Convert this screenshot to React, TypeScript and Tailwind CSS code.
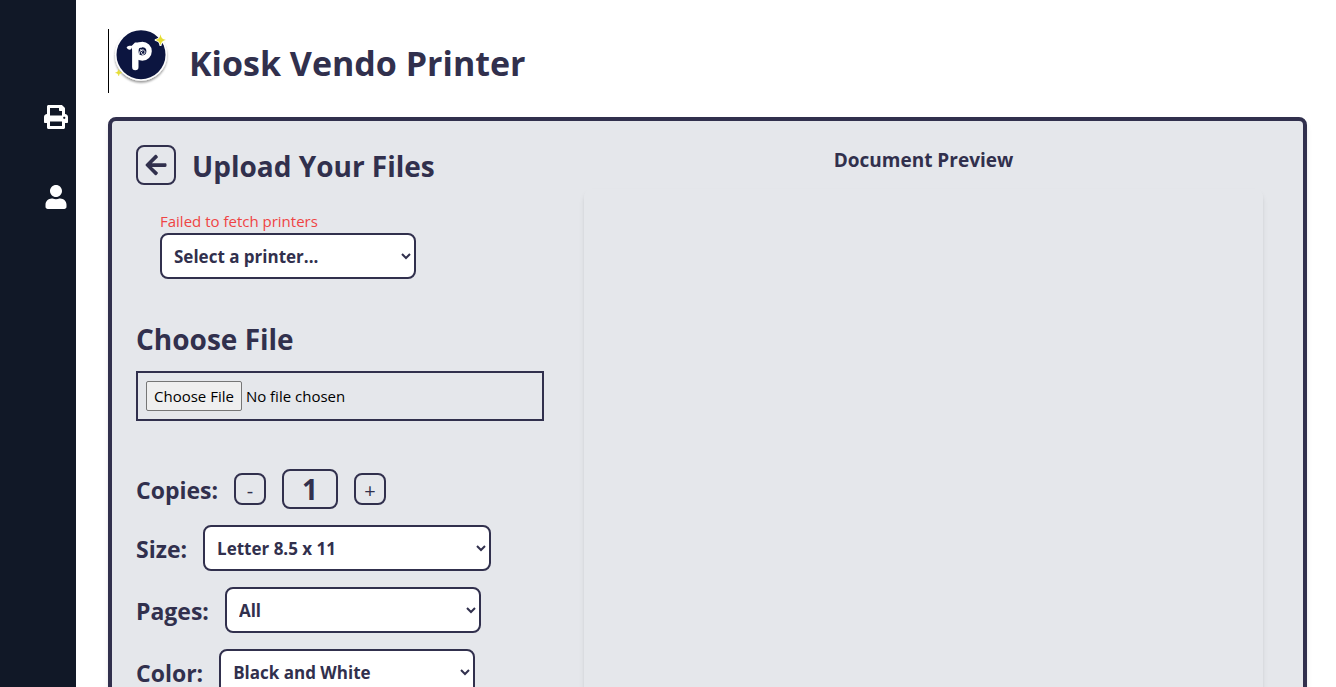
import { useState, type ReactNode } from "react";
import { FaArrowLeft, FaPrint, FaUser } from "react-icons/fa";

const selectClass =
  "h-[46px] rounded-lg border-2 border-[#31304d] bg-white px-2 text-[17px] font-bold text-[#31304d]";

const stepClass =
  "flex size-8 items-center justify-center rounded-lg border-2 border-[#31304d] pt-1 text-xl leading-6";

function Logo() {
  return (
    <svg viewBox="0 0 56 60" className="h-[60px] w-14 shrink-0" aria-label="Kiosk Vendo Printer logo" role="img">
      <defs>
        <filter id="logo-shadow" x="-20%" y="-20%" width="140%" height="150%">
          <feDropShadow dx="0" dy="2" stdDeviation="1.2" floodColor="#000" floodOpacity="0.4" />
        </filter>
      </defs>
      <circle cx="28" cy="25.700" r="26" fill="#fff" filter="url(#logo-shadow)" />
      <circle cx="28" cy="25.700" r="24.500" fill="#0c1540" />
      <path d="M22.300 38V20" fill="none" stroke="#fff" strokeWidth="6.400" strokeLinecap="round" />
      <circle cx="29.300" cy="22.300" r="6.800" fill="none" stroke="#fff" strokeWidth="5.400" />
      <path d="M22 13.500h7v5h-7l-3 3v-5z" fill="#fff" />
      <path d="M13.600 18.200c1.600-1.500 4-1.800 6-1.200l-1.200 2.800c-1 1.500-4.200 1-4.800-1.600z" fill="#fff" />
      <path
        d="M26.400 24.400c0-3 2.600-4.200 4.400-3.200s1.400 3.700-.6 4.200M27.300 20.700l2 1.300M28.300 23.200l1.300 2.800"
        fill="none"
        stroke="#fff"
        strokeWidth="0.900"
        strokeLinecap="round"
      />
      <path
        d="M47.500 5.300c.9 4 1.600 4.700 5.500 5.700-3.900 1-4.600 1.700-5.500 5.700-.9-4-1.600-4.700-5.500-5.700 3.900-1 4.600-1.700 5.500-5.700z"
        fill="#e6de35"
        stroke="#fff"
        strokeWidth="1.800"
        paintOrder="stroke"
      />
      <path
        d="M5.700 40.500c.6 2.200 1.100 2.700 3.200 3.200-2.100.5-2.600 1-3.200 3.200-.6-2.200-1.100-2.700-3.200-3.200 2.100-.5 2.600-1 3.200-3.200z"
        fill="#e6de35"
        stroke="#e6de35"
        strokeWidth="0.400"
      />
    </svg>
  );
}

function Sidebar() {
  return (
    <nav aria-label="Main" className="flex w-[76px] shrink-0 flex-col items-end gap-14 bg-[#111827] pt-[105px] pr-2 text-2xl text-white">
      <a href="#print" aria-label="Print"><FaPrint /></a>
      <a href="#account" aria-label="Account"><FaUser /></a>
    </nav>
  );
}

function Field({ id, label, children }: { id: string; label: string; children: ReactNode }) {
  return (
    <div className="flex items-center gap-4">
      <label htmlFor={id} className="pt-0.5 text-[23px] leading-8 font-bold">{label}</label>
      {children}
    </div>
  );
}

export default function App() {
  const [copies, setCopies] = useState(1);
  return (
    <div className="flex h-screen overflow-hidden bg-white font-['Open_Sans','Noto_Sans',sans-serif] text-[#31304d]">
      <Sidebar />
      <main className="min-w-0 flex-1 pt-[29px] pr-[29px] pl-8">
        <header className="flex h-16 items-start border-l border-black pl-1">
          <Logo />
          <h1 className="pt-[14px] pl-5 text-[34px] leading-10 font-bold">Kiosk Vendo Printer</h1>
        </header>

        <section className="mt-6 flex min-h-[800px] gap-10 rounded-lg border-4 border-[#31304d] bg-[#e5e7eb] p-6 shadow-md">
          <div className="w-[408px] shrink-0">
            <div className="flex items-center gap-4">
              <button type="button" aria-label="Back" className="flex size-10 items-center justify-center rounded-lg border-2 border-[#31304d] text-2xl">
                <FaArrowLeft />
              </button>
              <h2 className="pt-0.5 text-[28px] leading-9 font-bold">Upload Your Files</h2>
            </div>

            <div className="mt-6 pl-6">
              <p className="text-[15px] leading-6 text-[#ef4444]">Failed to fetch printers</p>
              <select aria-label="Printer" className={`${selectClass} block w-64`}>
                <option>Select a printer...</option>
              </select>
            </div>

            <label htmlFor="file" className="mt-10 block text-[28px] leading-10 font-bold">Choose File</label>
            <input
              id="file"
              type="file"
              className="mt-3 block h-[50px] w-full border-2 border-[#31304d] p-2 text-[15px] leading-6 text-black file:mr-1 file:h-[30px] file:rounded-xs file:border file:border-solid file:border-[#767676] file:bg-[#efefef] file:px-[7px]"
            />

            <div className="mt-12 flex flex-col gap-4">
              <div className="flex items-center gap-4">
                <label htmlFor="copies" className="pt-0.5 text-[23px] leading-8 font-bold">Copies:</label>
                <button type="button" aria-label="Fewer copies" onClick={() => setCopies(Math.max(1, copies - 1))} className={stepClass}>-</button>
                <input
                  id="copies"
                  inputMode="numeric"
                  value={copies}
                  onChange={(e) => setCopies(Number(e.target.value) || 1)}
                  className="h-10 w-14 rounded-lg border-2 border-[#31304d] text-center text-[28px] font-bold"
                />
                <button type="button" aria-label="More copies" onClick={() => setCopies(copies + 1)} className={stepClass}>+</button>
              </div>
              <Field id="size" label="Size:">
                <select id="size" className={`${selectClass} w-72`}>
                  <option>Letter 8.5 x 11</option>
                </select>
              </Field>
              <Field id="pages" label="Pages:">
                <select id="pages" className={`${selectClass} w-64`}>
                  <option>All</option>
                </select>
              </Field>
              <Field id="color" label="Color:">
                <select id="color" className={`${selectClass} w-64`}>
                  <option>Black and White</option>
                </select>
              </Field>
            </div>
          </div>

          <div className="mr-4 flex flex-1 flex-col">
            <h2 className="text-center text-[19px] leading-[30px] font-bold">Document Preview</h2>
            <div className="mt-[14px] flex-1 rounded-lg shadow-md" />
          </div>
        </section>
      </main>
    </div>
  );
}
